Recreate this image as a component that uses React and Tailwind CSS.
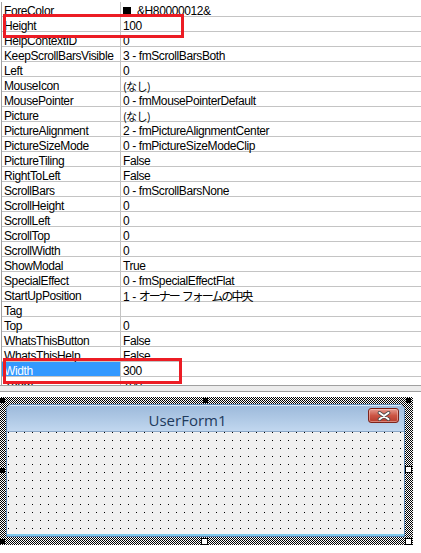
import React from 'react';

const props = [
  ['ForeColor', 'color'],
  ['Height', '100'],
  ['HelpContextID', '0'],
  ['KeepScrollBarsVisible', '3 - fmScrollBarsBoth'],
  ['Left', '0'],
  ['MouseIcon', 'none'],
  ['MousePointer', '0 - fmMousePointerDefault'],
  ['Picture', 'none'],
  ['PictureAlignment', '2 - fmPictureAlignmentCenter'],
  ['PictureSizeMode', '0 - fmPictureSizeModeClip'],
  ['PictureTiling', 'False'],
  ['RightToLeft', 'False'],
  ['ScrollBars', '0 - fmScrollBarsNone'],
  ['ScrollHeight', '0'],
  ['ScrollLeft', '0'],
  ['ScrollTop', '0'],
  ['ScrollWidth', '0'],
  ['ShowModal', 'True'],
  ['SpecialEffect', '0 - fmSpecialEffectFlat'],
  ['StartUpPosition', 'owner'],
  ['Tag', ''],
  ['Top', '0'],
  ['WhatsThisButton', 'False'],
  ['WhatsThisHelp', 'False'],
  ['Width', '300'],
  ['Zoom', '100'],
];

const renderValue = (v) => {
  if (v === 'color') {
    return (
      <span className="flex items-center">
        <span className="w-[8px] h-[8px] bg-black mr-[6px] mt-[-1px]"></span>
        &amp;H80000012&amp;
      </span>
    );
  }
  if (v === 'none') {
    return <span className="font-['Noto_Sans_CJK_JP',sans-serif] text-[11px] tracking-[-0.6px]">(なし)</span>;
  }
  if (v === 'owner') {
    return (
      <span>
        1 - <span className="font-['Noto_Sans_CJK_JP',sans-serif] text-[12px] tracking-[-2px]">オーナー</span>
        <span className="ml-[3px] font-['Noto_Sans_CJK_JP',sans-serif] text-[12px] tracking-[-2px]">フォームの中央</span>
      </span>
    );
  }
  return v;
};

const PropRow = ({ name, value, selected }) => (
  <div className="flex h-[15px] border-b border-[#c4c4c4] leading-[12px]">
    <div className={`w-[118px] h-full pl-[2px] pt-[3px] whitespace-nowrap ${selected ? 'bg-[#3399ff] text-white' : ''}`}>
      {name}
    </div>
    <div className="flex-1 h-full border-l border-[#c4c4c4] pl-[2px] pt-[3px] whitespace-nowrap">
      {renderValue(value)}
    </div>
  </div>
);

const BlackHandle = ({ pos }) => <div className={`absolute w-[5px] h-[5px] bg-black ${pos}`}></div>;
const WhiteHandle = ({ pos }) => <div className={`absolute w-[7px] h-[7px] bg-white border border-black ${pos}`}></div>;

export default function App() {
  return (
    <div className="relative w-[421px] h-[553px] bg-white overflow-hidden text-[12px] text-black tracking-[-0.4px] font-['Liberation_Sans','Noto_Sans_CJK_JP',sans-serif]">
      {/* Property grid */}
      <div className="h-[385px] overflow-hidden pt-[2px] pl-[1px]">
        <div className="border-l border-[#a0a0a0]">
          {props.map(([name, value]) => (
            <PropRow key={name} name={name} value={value} selected={name === 'Width'} />
          ))}
        </div>
      </div>

      {/* Splitter */}
      <div className="h-[7px] border-t border-b border-[#a0a0a0] bg-[#ececec]"></div>

      {/* Form designer */}
      <div className="pt-[5px]">
        <div className="relative w-[413px] h-[148px] pl-[6px] pt-[7px] pr-[8px] pb-[8px] bg-[repeating-conic-gradient(#000_0_25%,#fff_0_50%)] bg-[length:2px_2px]">
          <div className="flex flex-col h-full bg-white border border-[#5b84b1] rounded-t-[6px] overflow-hidden">
            <div className="h-[26px] flex bg-linear-to-b from-[#9dbadb] to-[#c1d7ef] border-t border-[#dbe8f6]">
              <div className="flex-1 text-center pt-[4px] leading-[20px] text-[15px] tracking-normal text-[#1e3a5c] font-['Open_Sans',sans-serif]">
                UserForm1
              </div>
              <div className="mt-[2px] mr-[5px] w-[31px] h-[15px] rounded-[3px] border border-[#7d241c] bg-linear-to-b from-[#e49a90] via-[#cc5545] to-[#b63a2c] flex items-center justify-center shadow-[inset_0_0_0_1px_rgba(255,220,210,0.45)]">
                <svg width="14" height="10" viewBox="0 0 14 10">
                  <path d="M2.5 1.8 L11.5 8.2 M11.5 1.8 L2.5 8.2" stroke="#4a4a4a" strokeWidth="3.6" strokeLinecap="round" />
                  <path d="M2.5 1.8 L11.5 8.2 M11.5 1.8 L2.5 8.2" stroke="#ffffff" strokeWidth="2" strokeLinecap="round" />
                </svg>
              </div>
            </div>
            <div className="relative flex-1 bg-[#f0f0f0] border-t border-[#8aa6c6] border-b-2 border-b-[#7fc7ea]">
              <svg className="absolute inset-0 w-full h-full" shapeRendering="crispEdges">
                <defs>
                  <pattern id="grid" width="8" height="8" patternUnits="userSpaceOnUse">
                    <rect x="1" y="0" width="1" height="1" fill="#000" />
                  </pattern>
                </defs>
                <rect width="100%" height="100%" fill="url(#grid)" />
              </svg>
            </div>
          </div>

          <BlackHandle pos="left-0 top-[1px]" />
          <BlackHandle pos="left-[203px] top-[1px]" />
          <BlackHandle pos="left-[406px] top-[1px]" />
          <BlackHandle pos="left-0 top-[71px]" />
          <BlackHandle pos="left-0 top-[142px]" />
          <WhiteHandle pos="left-[405px] top-[69px]" />
          <WhiteHandle pos="left-[201px] top-[141px]" />
          <WhiteHandle pos="left-[405px] top-[141px]" />
        </div>
      </div>

      {/* Annotation boxes */}
      <div className="absolute left-[3px] top-[14px] w-[181px] h-[24px] border-[3px] border-[#ec1c24]"></div>
      <div className="absolute left-[3px] top-[358px] w-[179px] h-[26px] border-[3px] border-[#ec1c24]"></div>
    </div>
  );
}
